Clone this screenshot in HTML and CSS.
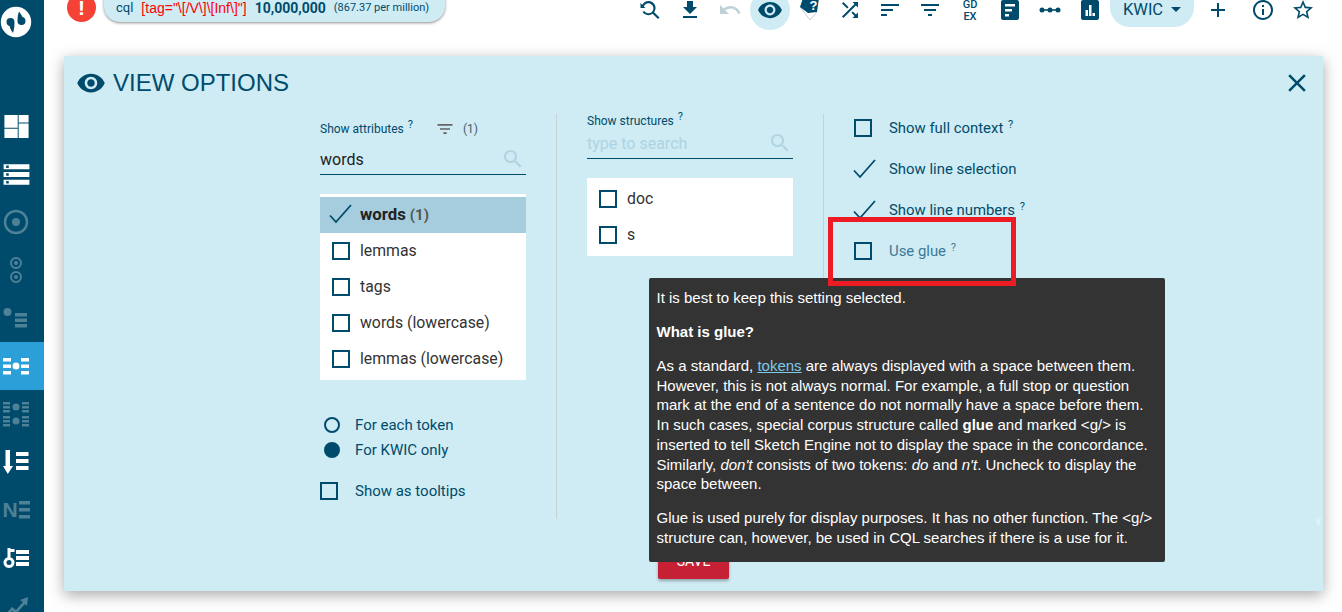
FILE: index.html
```html
<!DOCTYPE html>
<html lang="en">
<head>
    <meta charset="UTF-8">
    <title>View options</title>
    <link rel="stylesheet" href="styles.css">
</head>
<body>
    <svg class="defs" width="0" height="0">
        <symbol id="i-search" viewBox="0 0 24 24"><path d="M15.5 14h-.79l-.28-.27C15.41 12.59 16 11.11 16 9.5 16 5.91 13.09 3 9.5 3S3 5.91 3 9.5 5.91 16 9.5 16c1.61 0 3.09-.59 4.23-1.57l.27.28v.79l5 4.99L20.49 19l-4.99-5zm-6 0C7.01 14 5 11.99 5 9.5S7.01 5 9.5 5 14 7.01 14 9.5 11.99 14 9.5 14z"/></symbol>
        <symbol id="i-eye" viewBox="0 0 24 24"><path d="M12 4.5C7 4.5 2.73 7.61 1 12c1.73 4.39 6 7.5 11 7.5s9.27-3.11 11-7.5c-1.73-4.39-6-7.5-11-7.5zM12 17c-2.76 0-5-2.24-5-5s2.24-5 5-5 5 2.24 5 5-2.24 5-5 5zm0-8c-1.66 0-3 1.34-3 3s1.34 3 3 3 3-1.34 3-3-1.34-3-3-3z"/></symbol>
        <symbol id="i-filter" viewBox="0 0 24 24"><path d="M10 18h4v-2h-4v2zM3 6v2h18V6H3zm3 7h12v-2H6v2z"/></symbol>
        <symbol id="i-check" viewBox="0 0 24 24"><path d="M2 13.500l6 6.500L23 3" fill="none" stroke="#004b6b" stroke-width="1.800"/></symbol>
    </svg>

    <!-- left menu -->
    <nav class="sidebar">
        <div class="logo">
            <svg width="32" height="32" viewBox="0 0 32 32">
                <circle cx="16" cy="16" r="15.200" fill="#fff"/>
                <path d="M6.500 16a4 4 0 0 1 8 0c0 4-.5 8-1.500 11-1.500-2-2.500-3.500-3.500-7a4 4 0 0 1-3-4z" fill="#004b6b"/>
                <path d="M25.500 15a4 4 0 0 1-8 0c0-4 .5-7 1.500-9.500 1.500 2 2.500 3.500 3.500 5.500a4 4 0 0 1 3 4z" fill="#004b6b"/>
            </svg>
        </div>
        <a class="side-item"><svg width="29" height="29" viewBox="0 0 24 24"><path d="M2 2.500h11v10.500H2zM13.800 2.500H22v6.200h-8.200zM13.800 9.500H22v12h-8.200zM2 13.800h11v7.700H2z" fill="#fff"/></svg></a>
        <a class="side-item"><svg width="31" height="31" viewBox="0 0 24 24"><path d="M2 20h20v-4H2v4zm2-3h2v2H4v-2zM2 4v4h20V4H2zm4 3H4V5h2v2zm-4 7h20v-4H2v4zm2-3h2v2H4v-2z" fill="#fff"/></svg></a>
        <a class="side-item faded"><svg width="26" height="26" viewBox="0 0 26 26"><circle cx="13" cy="13" r="11" fill="none" stroke="#fff" stroke-width="2.500"/><circle cx="13" cy="13" r="4" fill="#fff"/></svg></a>
        <a class="side-item faded"><svg width="16" height="28" viewBox="0 0 16 28"><g fill="none" stroke="#fff" stroke-width="2"><circle cx="8" cy="7" r="5"/><circle cx="8" cy="21" r="5"/></g><circle cx="8" cy="7" r="2" fill="#fff"/><circle cx="8" cy="21" r="2" fill="#fff"/></svg></a>
        <a class="side-item faded"><svg width="26" height="22" viewBox="0 0 26 22"><circle cx="4.500" cy="5" r="4" fill="#fff"/><path d="M12 6h12v3.500H12zM12 11.500h12V15H12zM12 17h12v3.500H12z" fill="#fff"/></svg></a>
        <a class="side-item active"><svg width="26" height="18" viewBox="0 0 26 18"><circle cx="13" cy="9" r="3.500" fill="#fff"/><path d="M0 1h8v3.500H0zM18 1h8v3.500h-8zM0 7.500h8V11H0zM18 7.500h8V11h-8zM0 14h8v3.500H0zM18 14h8v3.500h-8z" fill="#fff"/></svg></a>
        <a class="side-item faded"><svg width="26" height="26" viewBox="0 0 26 26"><g fill="#fff"><circle cx="13" cy="6" r="3.500"/><circle cx="13" cy="20" r="3.500"/><path d="M0 1h7v2.500H0zM19 1h7v2.500h-7zM0 5h7v2.500H0zM19 5h7v2.500h-7zM0 9h7v2.500H0zM19 9h7v2.500h-7zM0 15h7v2.500H0zM19 15h7v2.500h-7zM0 19h7v2.500H0zM19 19h7v2.500h-7zM0 23h7v2.500H0zM19 23h7v2.500h-7z"/></g></svg></a>
        <a class="side-item"><svg width="26" height="24" viewBox="0 0 26 24"><path d="M2.500 0h4.500v16h3l-5.200 8L0 16h2.500zM13 2h12.500v4H13zM13 9h12.500v4H13zM13 16h12.500v4H13z" fill="#fff"/></svg></a>
        <a class="side-item faded"><span class="side-n">N</span><svg width="11" height="20" viewBox="0 0 11 20"><path d="M0 1h11v3.500H0zM0 8h11v3.500H0zM0 15h11v3.500H0z" fill="#fff"/></svg></a>
        <a class="side-item"><svg width="26" height="20" viewBox="0 0 26 20"><path d="M4.500 0h3v1h4v3h-4v5.200a5.500 5.500 0 1 1-3 0zM6 12a2.500 2.500 0 1 0 0 5 2.500 2.500 0 0 0 0-5zM13 2h13v4H13zM13 8h13v4H13zM13 14h13v4H13z" fill="#fff" fill-rule="evenodd"/></svg></a>
        <a class="side-item faded"><svg width="26" height="22" viewBox="0 0 26 22"><path d="M1 21l8-9 4 3 7-8-3-2 8-3-1 9-2-2-9 10-4-3-6 7z" fill="#fff"/></svg></a>
    </nav>

    <div class="main">
        <!-- top bar -->
        <header class="topbar">
            <span class="alert">!</span>
            <div class="query">
                <span>cql</span>
                <span class="query-red">[tag="\[/V\]\[Inf\]"]</span>
                <b class="query-count">10,000,000</b>
                <span class="query-ipm">(867.37 per million)</span>
            </div>
            <div class="tools">
                <a class="tool"><svg width="24" height="24" viewBox="0 0 24 24"><path d="M10.500 3a7 7 0 0 1 5.600 11.200l5.400 5.400-1.500 1.500-5.400-5.400A7 7 0 0 1 4.500 14l1.700-1a5 5 0 1 0-.4-4.500L7.500 10H2.500V5l1.800 1.800A7 7 0 0 1 10.500 3z"/></svg></a>
                <a class="tool"><svg width="24" height="24" viewBox="0 0 24 24"><path d="M19 9h-4V3H9v6H5l7 7 7-7zM5 18v2h14v-2H5z"/></svg></a>
                <a class="tool dim"><svg width="24" height="24" viewBox="0 0 24 24"><path d="M12.500 8c-2.650 0-5.050.99-6.900 2.600L2 7v9h9l-3.620-3.620c1.390-1.160 3.160-1.880 5.120-1.880 3.540 0 6.550 2.310 7.600 5.500l2.370-.78C21.080 11.030 17.150 8 12.500 8z"/></svg></a>
                <a class="tool tool-on"><svg width="26" height="26"><use href="#i-eye"/></svg></a>
                <a class="tool tool-book"><svg width="24" height="24" viewBox="0 0 24 24"><path d="M4 9l10 13 7-8" fill="#fff" stroke="#c5ccd8"/><path d="M4 9l3-9h16l-2 14-9 1z"/><text x="13.500" y="12" class="book-mark">?</text></svg></a>
                <a class="tool"><svg width="24" height="24" viewBox="0 0 24 24"><path d="M10.590 9.170L5.410 4 4 5.410l5.170 5.170 1.420-1.410zM14.500 4l2.040 2.040L4 18.590 5.410 20 17.960 7.460 20 9.500V4h-5.500zm.33 9.410l-1.410 1.410 3.130 3.130L14.500 20H20v-5.500l-2.040 2.040-3.130-3.130z"/></svg></a>
                <a class="tool"><svg width="24" height="24" viewBox="0 0 24 24"><path d="M3 18h6v-2H3v2zM3 6v2h18V6H3zm0 7h12v-2H3v2z"/></svg></a>
                <a class="tool"><svg width="24" height="24"><use href="#i-filter"/></svg></a>
                <a class="tool tool-gdex">GD<br>EX</a>
                <a class="tool"><svg width="24" height="24" viewBox="0 0 24 24"><path d="M5 2h14c1.100 0 2 .9 2 2v16c0 1.100-.9 2-2 2H5c-1.100 0-2-.9-2-2V4c0-1.100.9-2 2-2zm2 4v2.500h10V6H7zm0 5v2.500h7V11H7zm0 5v2.500h4V16H7z"/></svg></a>
                <a class="tool"><svg width="24" height="24" viewBox="0 0 24 24"><circle cx="4" cy="12" r="2.500"/><circle cx="12" cy="12" r="2.500"/><circle cx="20" cy="12" r="2.500"/><path d="M4 11.200h16v1.600H4z"/></svg></a>
                <a class="tool"><svg width="24" height="24" viewBox="0 0 24 24"><path d="M5 2h14c1.100 0 2 .9 2 2v16c0 1.100-.9 2-2 2H5c-1.100 0-2-.9-2-2V4c0-1.100.9-2 2-2zm2.500 16H10v-6H7.500v6zm3.500 0h2.500V7H11v11zm3.500 0H17v-3h-2.500v3z" fill-rule="evenodd"/></svg></a>
                <a class="kwic">KWIC<span class="caret"></span></a>
                <a class="tool tool-plus"><svg width="24" height="24" viewBox="0 0 24 24"><path d="M19 13h-6v6h-2v-6H5v-2h6V5h2v6h6v2z"/></svg></a>
                <a class="tool"><svg width="24" height="24" viewBox="0 0 24 24"><path d="M11 7h2v2h-2zm0 4h2v6h-2zm1-9C6.480 2 2 6.480 2 12s4.480 10 10 10 10-4.480 10-10S17.520 2 12 2zm0 18c-4.410 0-8-3.590-8-8s3.590-8 8-8 8 3.590 8 8-3.590 8-8 8z"/></svg></a>
                <a class="tool"><svg width="24" height="24" viewBox="0 0 24 24"><path d="M22 9.240l-7.190-.62L12 2 9.190 8.630 2 9.240l5.460 4.730L5.820 21 12 17.270 18.180 21l-1.630-7.030L22 9.240zM12 15.400l-3.760 2.270 1-4.280-3.320-2.880 4.380-.38L12 6.100l1.710 4.040 4.380.38-3.320 2.880 1 4.280L12 15.400z"/></svg></a>
            </div>
        </header>

        <!-- view options panel -->
        <section class="panel">
            <div class="panel-head">
                <h1 class="panel-title"><svg width="30" height="30"><use href="#i-eye"/></svg>VIEW OPTIONS</h1>
                <svg class="panel-close" width="30" height="30" viewBox="0 0 24 24"><path d="M19 6.410L17.590 5 12 10.590 6.410 5 5 6.410 10.590 12 5 17.590 6.410 19 12 13.410 17.590 19 19 17.590 13.410 12z"/></svg>
            </div>

            <div class="columns">
                <div class="col">
                    <div class="col-label col-label-attr">
                        <span>Show attributes <span class="hint">?</span></span>
                        <svg class="label-filter" width="20" height="20"><use href="#i-filter"/></svg>
                        <span class="label-count">(1)</span>
                    </div>
                    <div class="search"><span>words</span><svg width="24" height="24"><use href="#i-search"/></svg></div>
                    <ul class="list">
                        <li class="list-row selected"><svg class="tick" width="24" height="24"><use href="#i-check"/></svg><span><b>words</b> <b class="row-count">(1)</b></span></li>
                        <li class="list-row"><i class="box"></i>lemmas</li>
                        <li class="list-row"><i class="box"></i>tags</li>
                        <li class="list-row"><i class="box"></i>words (lowercase)</li>
                        <li class="list-row"><i class="box"></i>lemmas (lowercase)</li>
                    </ul>
                    <div class="radios">
                        <div class="radio-row"><i class="radio"></i>For each token</div>
                        <div class="radio-row"><i class="radio on"></i>For KWIC only</div>
                    </div>
                    <div class="tooltips-row"><i class="box"></i>Show as tooltips</div>
                </div>

                <div class="col">
                    <div class="col-label">Show structures <span class="hint">?</span></div>
                    <div class="search placeholder"><span>type to search</span><svg width="24" height="24"><use href="#i-search"/></svg></div>
                    <ul class="list list-small">
                        <li class="list-row"><i class="box"></i>doc</li>
                        <li class="list-row"><i class="box"></i>s</li>
                    </ul>
                </div>

                <div class="col col-last">
                    <div class="opt"><i class="box"></i><span>Show full context <span class="hint">?</span></span></div>
                    <div class="opt"><svg class="tick" width="24" height="24"><use href="#i-check"/></svg><span>Show line selection</span></div>
                    <div class="opt"><svg class="tick" width="24" height="24"><use href="#i-check"/></svg><span>Show line numbers <span class="hint">?</span></span></div>
                    <div class="opt opt-off"><i class="box"></i><span>Use glue <span class="hint">?</span></span></div>
                </div>
            </div>

            <div class="actions"><button class="save">SAVE</button></div>

            <span class="scroll-mark">v</span>

            <div class="tooltip">
                <p>It is best to keep this setting selected.</p>
                <p><b>What is glue?</b></p>
                <p>As a standard, <a href="#">tokens</a> are always displayed with a space between them. However, this is not always normal. For example, a full stop or question mark at the end of a sentence do not normally have a space before them. In such cases, special corpus structure called <b>glue</b> and marked &lt;g/&gt; is inserted to tell Sketch Engine not to display the space in the concordance. Similarly, <i>don't</i> consists of two tokens: <i>do</i> and <i>n't</i>. Uncheck to display the space between.</p>
                <p>Glue is used purely for display purposes. It has no other function. The &lt;g/&gt; structure can, however, be used in CQL searches if there is a use for it.</p>
            </div>
            <div class="red-mark"></div>
        </section>
    </div>
</body>
</html>
```

FILE: styles.css
```css
*{
    margin: 0;
    padding: 0;
    box-sizing: border-box;
}
html, body{
    height: 100%;
    overflow: hidden;
}
body{
    display: flex;
    background-color: #fff;
    font-family: Roboto, "Liberation Sans", sans-serif;
    color: #004b6b;
}
ul{
    list-style: none;
}
.defs{
    position: absolute;
}

/* left menu */
.sidebar{
    width: 44px;
    height: 612px;
    flex-shrink: 0;
    overflow: hidden;
    background-color: #004b6b;
}
.logo{
    height: 102px;
    padding: 6px 12px 0 0;
    display: flex;
    justify-content: center;
    align-items: flex-start;
}
.side-item{
    height: 48px;
    padding-right: 12px;
    display: flex;
    align-items: center;
    justify-content: center;
}
.side-item.active{
    background-color: #2a9fd8;
}
.side-item.faded{
    opacity: 0.3;
}
.side-n{
    font: bold 21px "Liberation Sans", sans-serif;
    color: #fff;
    margin-right: 1px;
}

/* top bar */
.main{
    flex: 1;
    min-width: 0;
}
.topbar{
    height: 56px;
    display: flex;
    align-items: flex-start;
    padding: 0 19px 0 23px;
}
.alert{
    width: 29px;
    height: 29px;
    margin-top: -7px;
    border-radius: 50%;
    background-color: #f44336;
    color: #fff;
    font: bold 21px/29px "Liberation Sans", sans-serif;
    text-align: center;
    flex-shrink: 0;
}
.query{
    width: 341px;
    height: 30px;
    margin: -8px 0 0 8px;
    padding: 1px 0 0 12px;
    display: flex;
    align-items: center;
    gap: 8px;
    border-radius: 0 0 16px 16px;
    background-color: #cfebf4;
    box-shadow: 0 1px 3px rgba(0,0,0,0.45);
    font-size: 13px;
    white-space: nowrap;
}
.query-red{
    color: #f00;
    font: 14px "Liberation Sans", sans-serif;
}
.query-count{
    font-size: 14px;
}
.query-ipm{
    font-size: 11px;
}
.tools{
    margin-left: auto;
    display: flex;
    align-items: flex-start;
}
.tool{
    width: 40px;
    height: 40px;
    margin-top: -10px;
    display: flex;
    align-items: center;
    justify-content: center;
    fill: #004b6b;
    flex-shrink: 0;
}
.tool.dim{
    opacity: 0.25;
}
.tool-on{
    background-color: #cfebf4;
    border-radius: 50%;
}
.tool-book{
    margin-left: -2px;
    margin-right: 2px;
}
.book-mark{
    font: bold 13px "Liberation Sans", sans-serif;
    fill: #fff;
}
.tool-gdex{
    font-size: 11px;
    line-height: 12px;
    font-weight: 500;
    text-align: center;
    margin-top: -9px;
}
.kwic{
    width: 84px;
    height: 36px;
    margin: -9px 4px 0 0;
    display: flex;
    align-items: center;
    justify-content: center;
    gap: 8px;
    border-radius: 0 0 20px 20px;
    background-color: #cfebf4;
    font-size: 16.500px;
}
.caret{
    width: 0;
    height: 0;
    border-left: 5px solid transparent;
    border-right: 5px solid transparent;
    border-top: 5px solid #004b6b;
}
.tool-plus{
    margin-right: 5px;
}

/* panel */
.panel{
    position: relative;
    width: 1259px;
    height: 535px;
    margin-left: 20px;
    background-color: #cfebf4;
    box-shadow: 0 4px 14px rgba(0,0,0,0.35);
}
.panel-head{
    height: 58px;
    padding: 0 11px 4px 12px;
    display: flex;
    align-items: center;
    justify-content: space-between;
}
.panel-title{
    display: flex;
    align-items: center;
    gap: 7px;
    font: normal 24px "Liberation Sans", sans-serif;
    fill: #004b6b;
}
.panel-close{
    fill: #004b6b;
}
.columns{
    height: 405px;
    padding-left: 226px;
    display: grid;
    grid-template-columns: 267px 267px 1fr;
}
.col{
    padding: 0 30px;
    border-right: 1px solid #c8d2d6;
}
.col-last{
    padding: 0 30px 0 29px;
    border-right: 0;
    display: flex;
    flex-direction: column;
    gap: 14px;
}
.col-label{
    height: 14px;
    font-size: 12px;
    line-height: 15px;
    white-space: nowrap;
}
.col-label-attr{
    height: 30px;
    display: flex;
    align-items: center;
}
.label-filter{
    margin-left: 22px;
    fill: #666;
}
.label-count{
    margin-left: 8px;
    color: #44606e;
}
.hint{
    font-size: 11px;
    line-height: 0;
    vertical-align: 5px;
    margin-left: 1px;
}
.search{
    height: 31px;
    display: flex;
    align-items: center;
    justify-content: space-between;
    border-bottom: 1px solid #004b6b;
    font-size: 16px;
    color: #222;
}
.search span{
    padding-top: 1px;
}
.search svg{
    fill: #b0d4e2;
    margin-right: 1px;
}
.placeholder{
    color: #aed3e2;
}
.list{
    margin-top: 19px;
    padding: 3px 0;
    background-color: #fff;
}
.list-row{
    height: 36px;
    padding: 0 0 2px 12px;
    display: flex;
    align-items: center;
    gap: 10px;
    font-size: 15.800px;
    color: #333;
    white-space: nowrap;
}
.list-row .box{
    margin-top: 2px;
}
.list-row.selected{
    background-color: #a5cddd;
    color: #222;
    padding-left: 8px;
    gap: 8px;
}
.list-row.selected b:first-child{
    font-size: 16.800px;
}
.row-count{
    font-size: 15px;
    color: #555;
}
.box{
    width: 18px;
    height: 18px;
    border: 2px solid #004b6b;
    flex-shrink: 0;
}
.radios{
    margin-top: 32px;
}
.radio-row{
    height: 25px;
    padding-left: 4px;
    display: flex;
    align-items: center;
    gap: 15px;
    font-size: 15px;
}
.radio{
    width: 16px;
    height: 16px;
    border: 2px solid #004b6b;
    border-radius: 50%;
    flex-shrink: 0;
}
.radio.on{
    background-color: #004b6b;
}
.tooltips-row{
    margin-top: 16px;
    height: 25px;
    display: flex;
    align-items: center;
    gap: 17px;
    font-size: 15px;
}
.opt{
    height: 27px;
    display: flex;
    align-items: center;
    gap: 17px;
    font-size: 14.900px;
    white-space: nowrap;
    padding-left: 1px;
}
.opt .tick{
    margin-left: -2px;
    margin-right: -4px;
}
.opt-off span{
    color: #3a7a96;
}
.actions{
    margin-top: 24px;
    display: flex;
    justify-content: center;
}
.save{
    width: 71px;
    height: 36px;
    border: 0;
    border-radius: 2px;
    background-color: #c62035;
    color: #fff;
    font: 14px Roboto, sans-serif;
    box-shadow: 0 2px 3px rgba(0,0,0,0.3);
}
.scroll-mark{
    position: absolute;
    right: 2px;
    top: 458px;
    color: #e8f6fb;
    font-size: 12px;
}

/* help bubble over the panel */
.tooltip{
    position: absolute;
    left: 585px;
    top: 222px;
    width: 516px;
    height: 284px;
    padding: 10px 8px 10px 7.500px;
    border-radius: 2px;
    background-color: #333;
    color: #fff;
    font: 15px/19.700px "Liberation Sans", sans-serif;
}
.tooltip p{
    margin-bottom: 14.300px;
}
.tooltip a{
    color: #7ccbe8;
}
.red-mark{
    position: absolute;
    left: 764px;
    top: 161px;
    width: 188px;
    height: 69px;
    border: 5px solid #ed1c24;
}
```
